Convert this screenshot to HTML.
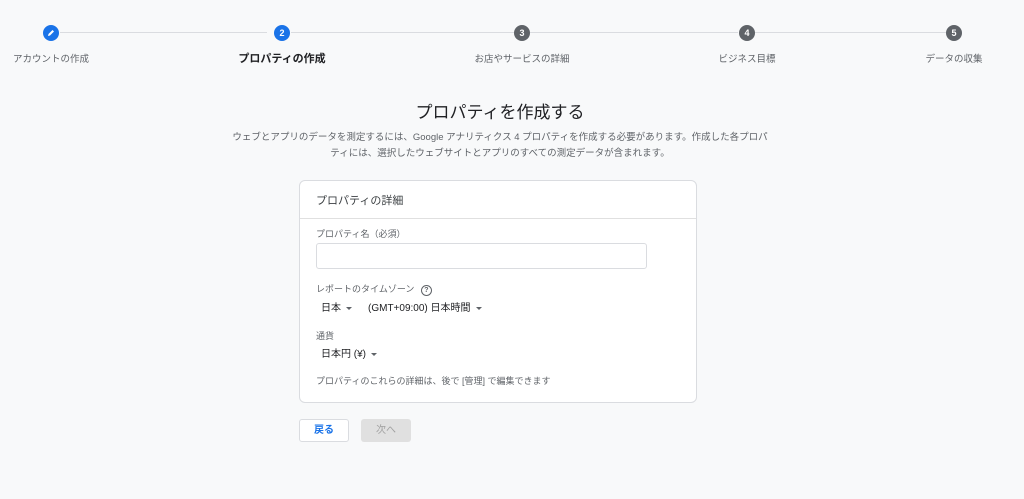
<!DOCTYPE html>
<html><head><meta charset="utf-8"><style>
*{box-sizing:border-box;margin:0;padding:0}
body{width:1024px;height:499px;background:#f8f9fa;font-family:"Liberation Sans","Noto Sans CJK JP",sans-serif;color:#3c4043;position:relative;overflow:hidden}
.abs{position:absolute}
.line{position:absolute;top:32px;height:1px;background:#dadce0}
.dot{position:absolute;top:25px;width:16px;height:16px;border-radius:50%;background:#5f6368;color:#fff;font-size:9px;font-weight:bold;text-align:center;line-height:16px}
.blue{background:#1a73e8}
.lbl{position:absolute;top:51px;font-size:9.5px;color:#5f6368;white-space:nowrap;transform:translateX(-50%)}
.small{font-size:9px;color:#5f6368}
.arrow{display:inline-block;border-left:3px solid transparent;border-right:3px solid transparent;border-top:3px solid #5f6368;vertical-align:middle;margin-left:5px}
</style></head><body>
<div class="line" style="left:60px;width:207px"></div>
<div class="line" style="left:291px;width:223px"></div>
<div class="line" style="left:530px;width:208px"></div>
<div class="line" style="left:754px;width:192px"></div>
<div class="dot blue" style="left:43px"><svg width="16" height="16" viewBox="0 0 16 16"><path d="M5 11l.5-2 4-4 1.5 1.5-4 4z" fill="#fff"/></svg></div>
<div class="dot blue" style="left:274px">2</div>
<div class="dot" style="left:514px">3</div>
<div class="dot" style="left:739px">4</div>
<div class="dot" style="left:946px">5</div>
<div class="lbl" style="left:51px">アカウントの作成</div>
<div class="lbl" style="left:282px;font-size:11px;font-weight:bold;color:#202124;top:50px">プロパティの作成</div>
<div class="lbl" style="left:522px">お店やサービスの詳細</div>
<div class="lbl" style="left:747px">ビジネス目標</div>
<div class="lbl" style="left:954px">データの収集</div>
<div class="abs" style="left:0;width:1000px;top:98px;text-align:center;font-size:17px;color:#202124">プロパティを作成する</div>
<div class="abs" style="left:230px;width:540px;top:130px;text-align:center;font-size:9.5px;line-height:16px;color:#5f6368">ウェブとアプリのデータを測定するには、Google アナリティクス 4 プロパティを作成する必要があります。作成した各プロパティには、選択したウェブサイトとアプリのすべての測定データが含まれます。</div>
<div class="abs" style="left:299px;top:180px;width:398px;height:223px;background:#fff;border:1px solid #dadce0;border-radius:6px">
 <div style="height:38px;border-bottom:1px solid #e0e0e0;padding:11px 16px;font-size:11px;color:#3c4043">プロパティの詳細</div>
 <div class="abs small" style="left:16px;top:46px">プロパティ名（必須）</div>
 <div class="abs" style="left:16px;top:62px;width:331px;height:26px;border:1px solid #dadce0;border-radius:3px"></div>
 <div class="abs small" style="left:16px;top:101px">レポートのタイムゾーン <span style="display:inline-block;width:11px;height:11px;border:1.3px solid #5f6368;border-radius:50%;font-size:7px;text-align:center;line-height:9px;margin-left:4px;font-weight:bold">?</span></div>
 <div class="abs" style="left:21px;top:118px;font-size:10px;color:#202124">日本<span class="arrow"></span></div>
 <div class="abs" style="left:68px;top:118px;font-size:10px;color:#202124">(GMT+09:00) 日本時間<span class="arrow"></span></div>
 <div class="abs small" style="left:16px;top:148px">通貨</div>
 <div class="abs" style="left:21px;top:164px;font-size:10px;color:#202124">日本円 (¥)<span class="arrow"></span></div>
 <div class="abs small" style="left:16px;top:193px">プロパティのこれらの詳細は、後で [管理] で編集できます</div>
</div>
<div class="abs" style="left:299px;top:419px;width:50px;height:23px;border:1px solid #dadce0;border-radius:3px;background:#fff;color:#1a73e8;font-size:10px;font-weight:bold;text-align:center;line-height:21px">戻る</div>
<div class="abs" style="left:361px;top:419px;width:50px;height:23px;border-radius:3px;background:#e0e0e0;color:#a0a0a0;font-size:10px;text-align:center;line-height:23px">次へ</div>
</body></html>
